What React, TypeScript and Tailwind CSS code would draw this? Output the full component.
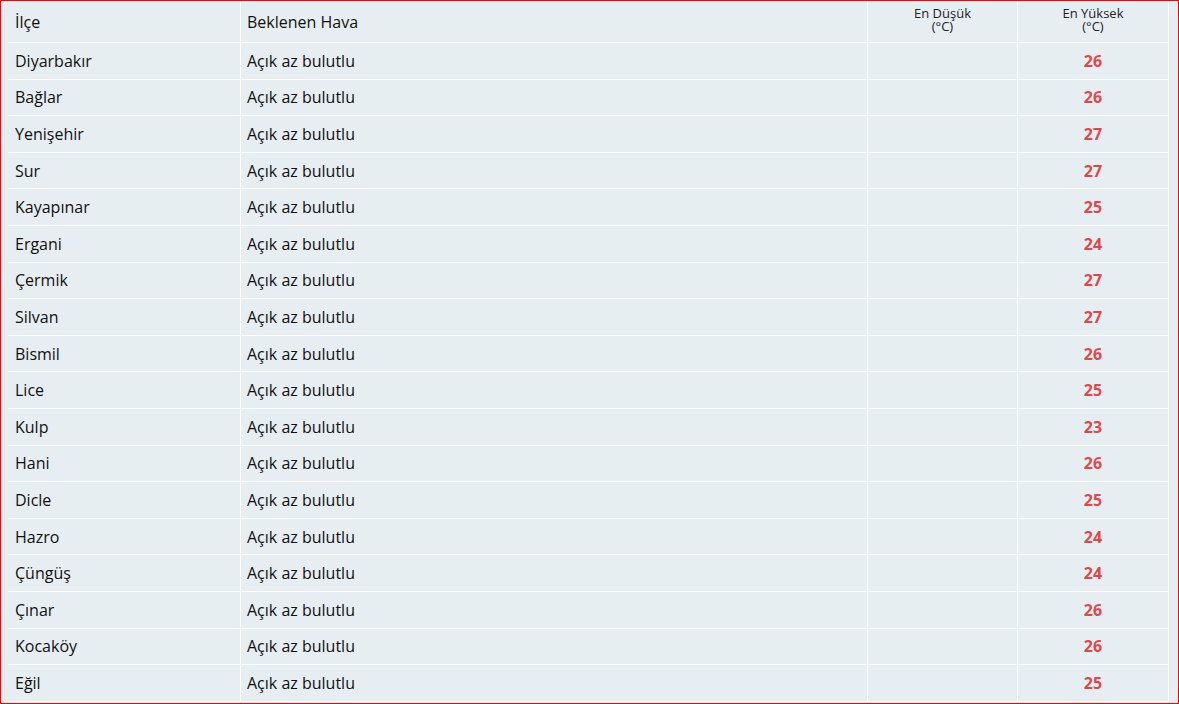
import React from "react";

const rows: [string, number][] = [
  ["Diyarbakır", 26],
  ["Bağlar", 26],
  ["Yenişehir", 27],
  ["Sur", 27],
  ["Kayapınar", 25],
  ["Ergani", 24],
  ["Çermik", 27],
  ["Silvan", 27],
  ["Bismil", 26],
  ["Lice", 25],
  ["Kulp", 23],
  ["Hani", 26],
  ["Dicle", 25],
  ["Hazro", 24],
  ["Çüngüş", 24],
  ["Çınar", 26],
  ["Kocaköy", 26],
  ["Eğil", 25],
];

export default function App() {
  return (
    <div
      className="w-[1179px] h-[704px] border border-[#ff0000] bg-[#e7eef2] overflow-hidden text-[#111]"
      style={{ fontFamily: '"Open Sans", "Noto Sans", sans-serif' }}
    >
      <div className="pl-[7px] w-[1168px]">
        <div className="grid grid-cols-[233px_627px_150px_151px] h-[42px] border-b border-white">
          <div className="border-r border-white flex items-center pl-[7px] text-[16px]">İlçe</div>
          <div className="border-r border-white flex items-center pl-[6px] text-[16px]">Beklenen Hava</div>
          <div className="border-r border-white flex flex-col items-center justify-center text-[13px] leading-[13px] pb-[3px] text-[#222]">
            <span>En Düşük</span>
            <span>(°C)</span>
          </div>
          <div className="border-r border-white flex flex-col items-center justify-center text-[13px] leading-[13px] pb-[3px] text-[#222]">
            <span>En Yüksek</span>
            <span>(°C)</span>
          </div>
        </div>
        {rows.map(([name, hi]) => (
          <div
            key={name}
            className="grid grid-cols-[233px_627px_150px_151px] h-[36.6px] border-b border-white text-[16px]"
          >
            <div className="border-r border-white flex items-center pl-[7px]">{name}</div>
            <div className="border-r border-white flex items-center pl-[6px]">Açık az bulutlu</div>
            <div className="border-r border-white"></div>
            <div className="border-r border-white flex items-center justify-center font-bold text-[#e0474c]">
              {hi}
            </div>
          </div>
        ))}
      </div>
    </div>
  );
}
